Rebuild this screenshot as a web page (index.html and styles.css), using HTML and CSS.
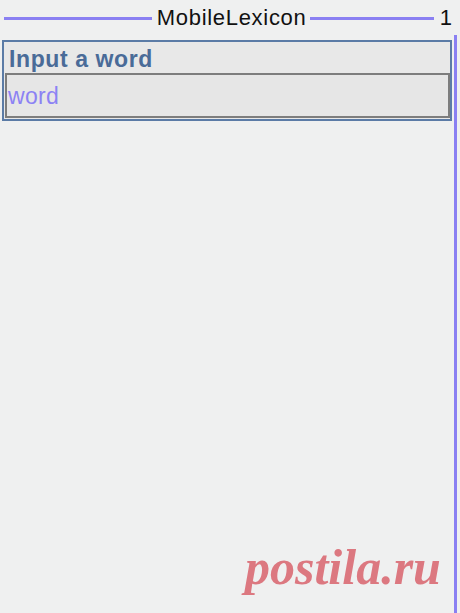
FILE: index.html
```html
<!DOCTYPE html>
<html>
<head>
<meta charset="utf-8">
<link rel="stylesheet" href="styles.css">
</head>
<body>
<div class="screen">
  <header class="titlebar">
    <span class="rule rule-left"></span>
    <span class="title">MobileLexicon</span>
    <span class="rule rule-right"></span>
    <span class="count">1</span>
  </header>
  <div class="main">
    <div class="content">
      <div class="group">
        <div class="label">Input a word</div>
        <div class="field"><span class="placeholder">word</span></div>
      </div>
    </div>
    <div class="scrollbar"></div>
  </div>
  <div class="watermark">postila.ru</div>
</div>
</body>
</html>
```
FILE: styles.css
```css
html, body {
  margin: 0;
  padding: 0;
  background: #eff0f0;
}
.screen {
  position: relative;
  width: 460px;
  height: 613px;
  overflow: hidden;
  display: flex;
  flex-direction: column;
  font-family: "Liberation Sans", Arial, sans-serif;
}
.titlebar {
  height: 35px;
  display: flex;
  align-items: center;
  padding: 0 8px 0 4px;
  box-sizing: border-box;
}
.rule {
  height: 3px;
  background: #8a80f2;
  margin-top: 1px;
}
.rule-left { width: 151px; }
.rule-right { width: 126px; }
.title {
  font-size: 22px;
  letter-spacing: 0.7px;
  color: #111;
  margin: 0 4px 0 5px;
  line-height: 1;
}
.count {
  font-size: 22px;
  color: #111;
  margin-left: 6px;
  line-height: 1;
}
.main {
  flex: 1;
  display: flex;
}
.content {
  width: 452px;
  padding: 5px 0 0 2px;
  box-sizing: border-box;
}
.group {
  width: 450px;
  border: 2px solid #5b7ba6;
  background: #e8e8e8;
  box-sizing: border-box;
  padding: 0 0 1px 1px;
}
.label {
  height: 31px;
  font-size: 23px;
  font-weight: bold;
  color: #4a6b98;
  padding-left: 4px;
  line-height: 35px;
  letter-spacing: 0.6px;
}
.field {
  width: 445px;
  height: 45px;
  border: 2px solid #7d7d7d;
  background: #e6e6e6;
  box-sizing: border-box;
  padding-left: 1px;
  display: flex;
  align-items: center;
}
.placeholder {
  font-size: 23px;
  color: #8c82f4;
  line-height: 1;
  margin-top: 1px;
  letter-spacing: 0.3px;
}
.scrollbar {
  width: 3px;
  margin-left: 2px;
  background: #8a80f2;
}
.watermark {
  position: absolute;
  left: 245px;
  top: 542px;
  font-family: "Liberation Serif", "Times New Roman", serif;
  font-weight: bold;
  font-style: italic;
  font-size: 50px;
  color: #dc7880;
  line-height: 1;
}
```
